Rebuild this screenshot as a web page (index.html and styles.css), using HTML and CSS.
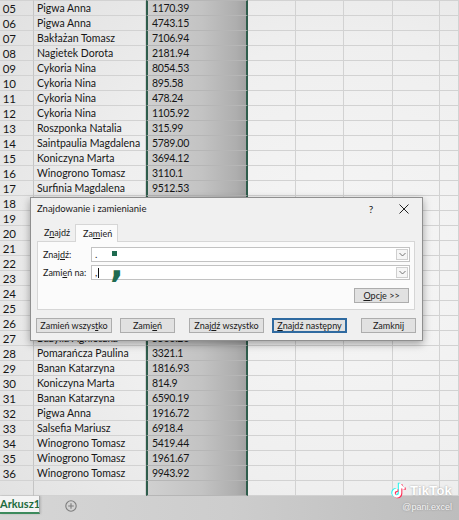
FILE: index.html
```html
<!DOCTYPE html>
<html lang="pl">
<head>
<meta charset="utf-8">
<title>Znajdowanie i zamienianie</title>
<link rel="stylesheet" href="styles.css">
</head>
<body>
<div class="sheet">
  <div class="row"><span class="rh"></span><span class="nm"></span><span class="val"></span><span></span><span></span><span></span><span></span><span></span></div>
  <div class="row"><span class="rh">05</span><span class="nm">Pigwa Anna</span><span class="val">1170.39</span><span></span><span></span><span></span><span></span><span></span></div>
  <div class="row"><span class="rh">06</span><span class="nm">Pigwa Anna</span><span class="val">4743.15</span><span></span><span></span><span></span><span></span><span></span></div>
  <div class="row"><span class="rh">07</span><span class="nm">Bakłażan Tomasz</span><span class="val">7106.94</span><span></span><span></span><span></span><span></span><span></span></div>
  <div class="row"><span class="rh">08</span><span class="nm">Nagietek Dorota</span><span class="val">2181.94</span><span></span><span></span><span></span><span></span><span></span></div>
  <div class="row"><span class="rh">09</span><span class="nm">Cykoria Nina</span><span class="val">8054.53</span><span></span><span></span><span></span><span></span><span></span></div>
  <div class="row"><span class="rh">10</span><span class="nm">Cykoria Nina</span><span class="val">895.58</span><span></span><span></span><span></span><span></span><span></span></div>
  <div class="row"><span class="rh">11</span><span class="nm">Cykoria Nina</span><span class="val">478.24</span><span></span><span></span><span></span><span></span><span></span></div>
  <div class="row"><span class="rh">12</span><span class="nm">Cykoria Nina</span><span class="val">1105.92</span><span></span><span></span><span></span><span></span><span></span></div>
  <div class="row"><span class="rh">13</span><span class="nm">Roszponka Natalia</span><span class="val">315.99</span><span></span><span></span><span></span><span></span><span></span></div>
  <div class="row"><span class="rh">14</span><span class="nm">Saintpaulia Magdalena</span><span class="val">5789.00</span><span></span><span></span><span></span><span></span><span></span></div>
  <div class="row"><span class="rh">15</span><span class="nm">Koniczyna Marta</span><span class="val">3694.12</span><span></span><span></span><span></span><span></span><span></span></div>
  <div class="row"><span class="rh">16</span><span class="nm">Winogrono Tomasz</span><span class="val">3110.1</span><span></span><span></span><span></span><span></span><span></span></div>
  <div class="row"><span class="rh">17</span><span class="nm">Surfinia Magdalena</span><span class="val">9512.53</span><span></span><span></span><span></span><span></span><span></span></div>
  <div class="row"><span class="rh">18</span><span class="nm"></span><span class="val"></span><span></span><span></span><span></span><span></span><span></span></div>
  <div class="row"><span class="rh">19</span><span class="nm"></span><span class="val"></span><span></span><span></span><span></span><span></span><span></span></div>
  <div class="row"><span class="rh">20</span><span class="nm"></span><span class="val"></span><span></span><span></span><span></span><span></span><span></span></div>
  <div class="row"><span class="rh">21</span><span class="nm"></span><span class="val"></span><span></span><span></span><span></span><span></span><span></span></div>
  <div class="row"><span class="rh">22</span><span class="nm"></span><span class="val"></span><span></span><span></span><span></span><span></span><span></span></div>
  <div class="row"><span class="rh">23</span><span class="nm"></span><span class="val"></span><span></span><span></span><span></span><span></span><span></span></div>
  <div class="row"><span class="rh">24</span><span class="nm"></span><span class="val"></span><span></span><span></span><span></span><span></span><span></span></div>
  <div class="row"><span class="rh">25</span><span class="nm"></span><span class="val"></span><span></span><span></span><span></span><span></span><span></span></div>
  <div class="row"><span class="rh">26</span><span class="nm"></span><span class="val"></span><span></span><span></span><span></span><span></span><span></span></div>
  <div class="row"><span class="rh">27</span><span class="nm">Bazylia Agnieszka</span><span class="val">5566.26</span><span></span><span></span><span></span><span></span><span></span></div>
  <div class="row"><span class="rh">28</span><span class="nm">Pomarańcza Paulina</span><span class="val">3321.1</span><span></span><span></span><span></span><span></span><span></span></div>
  <div class="row"><span class="rh">29</span><span class="nm">Banan Katarzyna</span><span class="val">1816.93</span><span></span><span></span><span></span><span></span><span></span></div>
  <div class="row"><span class="rh">30</span><span class="nm">Koniczyna Marta</span><span class="val">814.9</span><span></span><span></span><span></span><span></span><span></span></div>
  <div class="row"><span class="rh">31</span><span class="nm">Banan Katarzyna</span><span class="val">6590.19</span><span></span><span></span><span></span><span></span><span></span></div>
  <div class="row"><span class="rh">32</span><span class="nm">Pigwa Anna</span><span class="val">1916.72</span><span></span><span></span><span></span><span></span><span></span></div>
  <div class="row"><span class="rh">33</span><span class="nm">Salsefia Mariusz</span><span class="val">6918.4</span><span></span><span></span><span></span><span></span><span></span></div>
  <div class="row"><span class="rh">34</span><span class="nm">Winogrono Tomasz</span><span class="val">5419.44</span><span></span><span></span><span></span><span></span><span></span></div>
  <div class="row"><span class="rh">35</span><span class="nm">Winogrono Tomasz</span><span class="val">1961.67</span><span></span><span></span><span></span><span></span><span></span></div>
  <div class="row"><span class="rh">36</span><span class="nm">Winogrono Tomasz</span><span class="val">9943.92</span><span></span><span></span><span></span><span></span><span></span></div>
  <div class="row"><span class="rh"></span><span class="nm"></span><span class="val"></span><span></span><span></span><span></span><span></span><span></span></div>
</div>

<div class="tabbar">
  <div class="sheettab">Arkusz1</div>
  <svg class="addsheet" width="12" height="12" viewBox="0 0 12 12"><circle cx="6" cy="6" r="5.2" fill="none" stroke="#7d7d7d" stroke-width="1.1"/><path d="M6 3.2v5.6M3.2 6h5.6" stroke="#7d7d7d" stroke-width="1.1"/></svg>
</div>

<div class="dialog">
  <div class="titlebar">
    <span class="title">Znajdowanie i zamienianie</span>
    <span class="help">?</span>
    <svg class="close" width="10" height="10" viewBox="0 0 10 10"><path d="M0.5 0.5L9.5 9.5M9.5 0.5L0.5 9.5" stroke="#222" stroke-width="1"/></svg>
  </div>
  <div class="tabs">
    <span class="tab">Z<u>n</u>ajdź</span>
    <span class="tab active">Za<u>m</u>ień</span>
  </div>
  <div class="panel">
    <div class="fields">
      <label class="lbl">Znaj<u>d</u>ź:</label>
      <div class="input"><span class="txt">.</span><span class="dd"><svg width="7" height="5" viewBox="0 0 7 5"><path d="M0.5 1L3.5 4L6.5 1" fill="none" stroke="#666" stroke-width="0.9"/></svg></span></div>
      <label class="lbl">Zami<u>e</u>ń na:</label>
      <div class="input"><span class="txt">,<span class="caret"></span></span><span class="dd"><svg width="7" height="5" viewBox="0 0 7 5"><path d="M0.5 1L3.5 4L6.5 1" fill="none" stroke="#666" stroke-width="0.9"/></svg></span></div>
    </div>
    <div class="optrow"><span class="btn opt"><u>O</u>pcje &gt;&gt;</span></div>
  </div>
  <div class="buttons">
    <span class="btn b1">Zamień wszys<u>t</u>ko</span>
    <span class="btn b2">Zami<u>e</u>ń</span>
    <span class="btn b3">Znaj<u>d</u>ź wszystko</span>
    <span class="btn b4 default"><u>Z</u>najdź następny</span>
    <span class="btn b5">Zamknij</span>
  </div>
</div>

<span class="mark-square"></span>
<span class="mark-comma">,</span>

<div class="tiktok">
  <div class="tt-top">
    <svg class="tt-logo" width="19" height="21" viewBox="0 0 24 24">
      <path transform="translate(-1.3,-0.9)" fill="#25f4ee" d="M16.6 5.82A4.28 4.28 0 0 1 15.54 3h-3.09v12.4a2.59 2.59 0 0 1-2.59 2.5c-1.42 0-2.6-1.16-2.6-2.6 0-1.72 1.66-3.01 3.37-2.48V9.66c-3.45-.46-6.47 2.22-6.47 5.64 0 3.33 2.76 5.7 5.69 5.7 3.14 0 5.690-2.55 5.69-5.7V9.01a7.35 7.35 0 0 0 4.3 1.38V7.3s-1.88.09-3.24-1.48z"/>
      <path transform="translate(1.3,0.9)" fill="#fe2c55" d="M16.6 5.82A4.28 4.28 0 0 1 15.54 3h-3.09v12.4a2.59 2.59 0 0 1-2.59 2.5c-1.42 0-2.6-1.16-2.6-2.6 0-1.72 1.66-3.01 3.37-2.48V9.66c-3.45-.46-6.47 2.22-6.47 5.64 0 3.33 2.76 5.7 5.69 5.7 3.14 0 5.69-2.55 5.69-5.7V9.01a7.35 7.35 0 0 0 4.3 1.38V7.3s-1.88.09-3.24-1.48z"/>
      <path fill="#ffffff" d="M16.6 5.82A4.28 4.28 0 0 1 15.54 3h-3.09v12.4a2.59 2.59 0 0 1-2.59 2.5c-1.42 0-2.6-1.16-2.6-2.6 0-1.72 1.66-3.01 3.37-2.48V9.66c-3.45-.46-6.47 2.22-6.47 5.64 0 3.33 2.76 5.7 5.69 5.7 3.14 0 5.69-2.55 5.69-5.7V9.01a7.35 7.35 0 0 0 4.3 1.38V7.3s-1.88.09-3.24-1.48z"/>
    </svg>
    <span class="tt-name">TikTok</span>
  </div>
  <span class="tt-user">@pani.excel</span>
</div>
</body>
</html>
```
FILE: styles.css
```css
* {
  box-sizing: border-box;
  margin: 0;
  padding: 0;
}

html, body {
  width: 459px;
  height: 520px;
  overflow: hidden;
}

body {
  position: relative;
  font-family: Lato, "Liberation Sans", sans-serif;
  background: #e6e6e6;
  color: #1c1c1c;
}

/* ---------- spreadsheet ---------- */
.sheet {
  margin-top: -14px;
  background: radial-gradient(ellipse 95% 80% at 75% 55%, #f6f6f6 0%, #efefef 55%, #e1e1e1 100%);
}

.row {
  display: grid;
  grid-template-columns: 34px 112px 102px 48px 48px 49px 47px 1fr;
  height: 15px;
}

.row > span {
  display: block;
  height: 15px;
  border-right: 1px solid #d2d2d2;
  border-bottom: 1px solid #d2d2d2;
  font-size: 10.5px;
  line-height: 15px;
  white-space: nowrap;
  overflow: hidden;
  color: #161616;
}

.row > .rh {
  text-align: right;
  padding-right: 17px;
  font-size: 11.5px;
  border-right-color: #c4c4c4;
}

.row > .nm {
  padding-left: 3px;
}

.row > .val {
  padding-left: 4px;
  font-size: 10.5px;
  letter-spacing: -0.3px;
  background: linear-gradient(to right, #d0d0d0 0%, #c3c3c3 55%, #aeaeae 90%, #a2a2a2 100%);
  border-left: 2px solid #2f5d4c;
  border-right: 2px solid #2f5d4c;
  border-bottom-color: #b6b6b6;
}

/* ---------- sheet tabs ---------- */
.tabbar {
  height: 30px;
  display: flex;
  align-items: flex-start;
  gap: 25px;
  background: linear-gradient(to right, #d6d6d6 0%, #cdcdcd 50%, #bdbdbd 100%);
}

.sheettab {
  width: 40px;
  height: 18px;
  background: #f4f4f4;
  border-right: 1px solid #a8a8a8;
  border-bottom: 2px solid #3c8a5c;
  color: #1d6b3d;
  font-weight: 700;
  font-size: 11px;
  line-height: 16px;
  white-space: nowrap;
  overflow: hidden;
  box-shadow: 1px 0 2px rgba(0,0,0,0.15);
}

.addsheet {
  margin-top: 4px;
}

/* ---------- dialog ---------- */
.dialog {
  position: absolute;
  left: 30px;
  top: 197px;
  width: 393px;
  height: 144px;
  background: #f0f0f0;
  border: 1px solid #8f8f8f;
  box-shadow: 0 3px 8px rgba(0,0,0,0.35);
  font-size: 9px;
  color: #1a1a1a;
}

.dialog u {
  text-decoration: underline;
  text-underline-offset: 1px;
}

.titlebar {
  height: 21px;
  display: flex;
  align-items: center;
  padding-left: 6px;
}

.title {
  font-size: 9.5px;
  flex: 1;
}

.help {
  font-size: 10px;
  width: 10px;
  text-align: center;
  margin-right: 23px;
}

.close {
  margin-right: 13px;
}

.tabs {
  display: flex;
  margin: 5px 0 0 6px;
  height: 17px;
  position: relative;
  z-index: 1;
}

.tab {
  display: block;
  width: 38px;
  padding-left: 7px;
  line-height: 17px;
}

.tab.active {
  width: 43px;
  height: 18px;
  background: #fbfbfb;
  border: 1px solid #d6d6d6;
  border-bottom: none;
  line-height: 17px;
}

.panel {
  margin: 0 7px 0 6px;
  height: 69px;
  background: #fbfbfb;
  border: 1px solid #d6d6d6;
  padding: 5px 4px 0 5px;
}

.fields {
  display: grid;
  grid-template-columns: 48px 1fr;
  grid-auto-rows: 15px;
  row-gap: 3px;
  align-items: center;
}

.lbl {
  line-height: 15px;
}

.input {
  height: 15px;
  display: flex;
  align-items: center;
  background: #ffffff;
  border: 1px solid #c2c2c2;
  padding-left: 3px;
  padding-right: 1px;
}

.txt {
  flex: 1;
  font-size: 10px;
  line-height: 13px;
  display: flex;
  align-items: center;
}

.caret {
  display: inline-block;
  width: 1px;
  height: 10px;
  background: #111;
  margin-left: 1px;
}

.dd {
  width: 12px;
  height: 11px;
  display: flex;
  align-items: center;
  justify-content: center;
  border: 1px solid #cfcfcf;
  background: #f6f6f6;
}

.optrow {
  display: flex;
  justify-content: flex-end;
  margin-top: 8px;
  padding-right: 1px;
}

.btn {
  display: flex;
  align-items: center;
  justify-content: center;
  height: 15px;
  background: #e1e1e1;
  border: 1px solid #adadad;
  white-space: nowrap;
}

.opt {
  width: 55px;
}

.buttons {
  display: flex;
  margin-top: 8px;
  padding-left: 5px;
}

.b1 { width: 76px; }
.b2 { width: 55px; margin-left: 8px; }
.b3 { width: 75px; margin-left: 14px; }
.b4 { width: 75px; margin-left: 8px; }
.b5 { width: 55px; margin-left: 14px; }

.default {
  border: 2px solid #2f6aa0;
}

/* ---------- video annotations ---------- */
.mark-square {
  position: absolute;
  left: 112px;
  top: 251px;
  width: 5px;
  height: 5px;
  background: #1f6b50;
}

.mark-comma {
  position: absolute;
  left: 110px;
  top: 247px;
  font-family: "DejaVu Sans", sans-serif;
  font-weight: 700;
  font-size: 36px;
  line-height: 36px;
  color: #1f6b50;
}

/* ---------- TikTok watermark ---------- */
.tiktok {
  position: absolute;
  right: 7px;
  bottom: 8px;
  display: flex;
  flex-direction: column;
  align-items: flex-end;
  gap: 1px;
}

.tt-top {
  display: flex;
  align-items: center;
  gap: 2px;
}

.tt-name {
  font-family: "Liberation Sans", sans-serif;
  font-weight: 700;
  font-size: 13px;
  color: #ffffff;
  text-shadow: 0 0 2px rgba(0,0,0,0.35);
  letter-spacing: 0.2px;
}

.tt-user {
  font-family: "Liberation Sans", sans-serif;
  font-size: 9px;
  color: #f6f6f6;
  text-shadow: 0 0 2px rgba(0,0,0,0.35);
}
```
